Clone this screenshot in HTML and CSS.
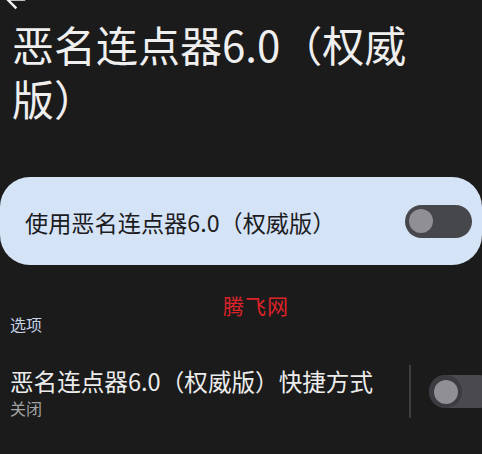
FILE: index.html
```html
<!DOCTYPE html>
<html lang="zh-CN">
<head>
<meta charset="utf-8">
<title>恶名连点器6.0（权威版）</title>
<link rel="stylesheet" href="styles.css">
</head>
<body>
<div class="page">
  <div class="toolbar">
    <svg class="back" width="29" height="29" viewBox="0 0 24 24" aria-hidden="true">
      <path d="M20 11H7.83l5.59-5.59L12 4l-8 8 8 8 1.41-1.41L7.83 13H20v-2z" fill="#f2f2f2"/>
    </svg>
  </div>
  <h1 class="title">恶名连点器6.0（权威版）</h1>
  <div class="main-card">
    <span class="main-label">使用恶名连点器6.0（权威版）</span>
    <span class="switch"><span class="thumb"></span></span>
  </div>
  <div class="section-label">选项</div>
  <div class="row">
    <div class="row-text">
      <div class="row-title">恶名连点器6.0（权威版）快捷方式</div>
      <div class="row-sub">关闭</div>
    </div>
    <div class="divider"></div>
    <span class="switch switch-row"><span class="halo"><span class="thumb"></span></span></span>
  </div>
  <div class="watermark">腾飞网</div>
</div>
</body>
</html>
```

FILE: styles.css
```css
html, body {
  margin: 0;
  padding: 0;
  background: #1b1b1b;
  overflow: hidden;
}
body {
  width: 482px;
  height: 454px;
  font-family: "Noto Sans CJK SC", "Noto Sans", sans-serif;
}
.page {
  position: relative;
  width: 482px;
  height: 454px;
  overflow: hidden;
}
.toolbar {
  height: 10px;
}
.back {
  display: block;
  margin-top: -15px;
  margin-left: 1px;
}
.title {
  margin: 22px 0 0 0;
  padding: 0 40px 0 12px;
  font-size: 42px;
  line-height: 54px;
  font-weight: 400;
  color: #efefef;
}
.main-card {
  margin-top: 52px;
  height: 88px;
  box-sizing: border-box;
  background: #d5e3f6;
  border-radius: 30px;
  display: flex;
  align-items: center;
  justify-content: space-between;
  padding: 0 10px 0 25px;
}
.main-label {
  font-size: 23.2px;
  line-height: 30px;
  color: #1c1c1f;
  padding-top: 2px;
}
.switch {
  flex: 0 0 auto;
  width: 67px;
  height: 33px;
  border-radius: 17px;
  background: #46474b;
  display: flex;
  align-items: center;
  padding-left: 4px;
  box-sizing: border-box;
}
.thumb {
  width: 24px;
  height: 24px;
  border-radius: 50%;
  background: #8f8f94;
}
.section-label {
  margin-top: 48px;
  padding-left: 10px;
  font-size: 16px;
  line-height: 22px;
  color: #c6d2e6;
}
.row {
  margin-top: 30px;
  display: flex;
  align-items: center;
  padding-left: 10px;
}
.row-text {
  flex: 0 0 399px;
}
.row-title {
  font-size: 23.6px;
  line-height: 32px;
  color: #ececec;
  white-space: nowrap;
}
.row-sub {
  margin-top: 1px;
  font-size: 16px;
  line-height: 20px;
  color: #a3a3a3;
}
.divider {
  flex: 0 0 2px;
  height: 53px;
  background: #3e3e3e;
}
.switch-row {
  margin-left: 18px;
  padding-left: 0;
  background: #4a4a4e;
}
.halo {
  width: 33px;
  height: 33px;
  border-radius: 50%;
  background: #3c3c40;
  display: flex;
  align-items: center;
  justify-content: center;
}
.watermark {
  position: absolute;
  left: 223px;
  top: 290px;
  font-size: 21px;
  line-height: 30px;
  color: #dd2228;
  letter-spacing: 1px;
}
```
